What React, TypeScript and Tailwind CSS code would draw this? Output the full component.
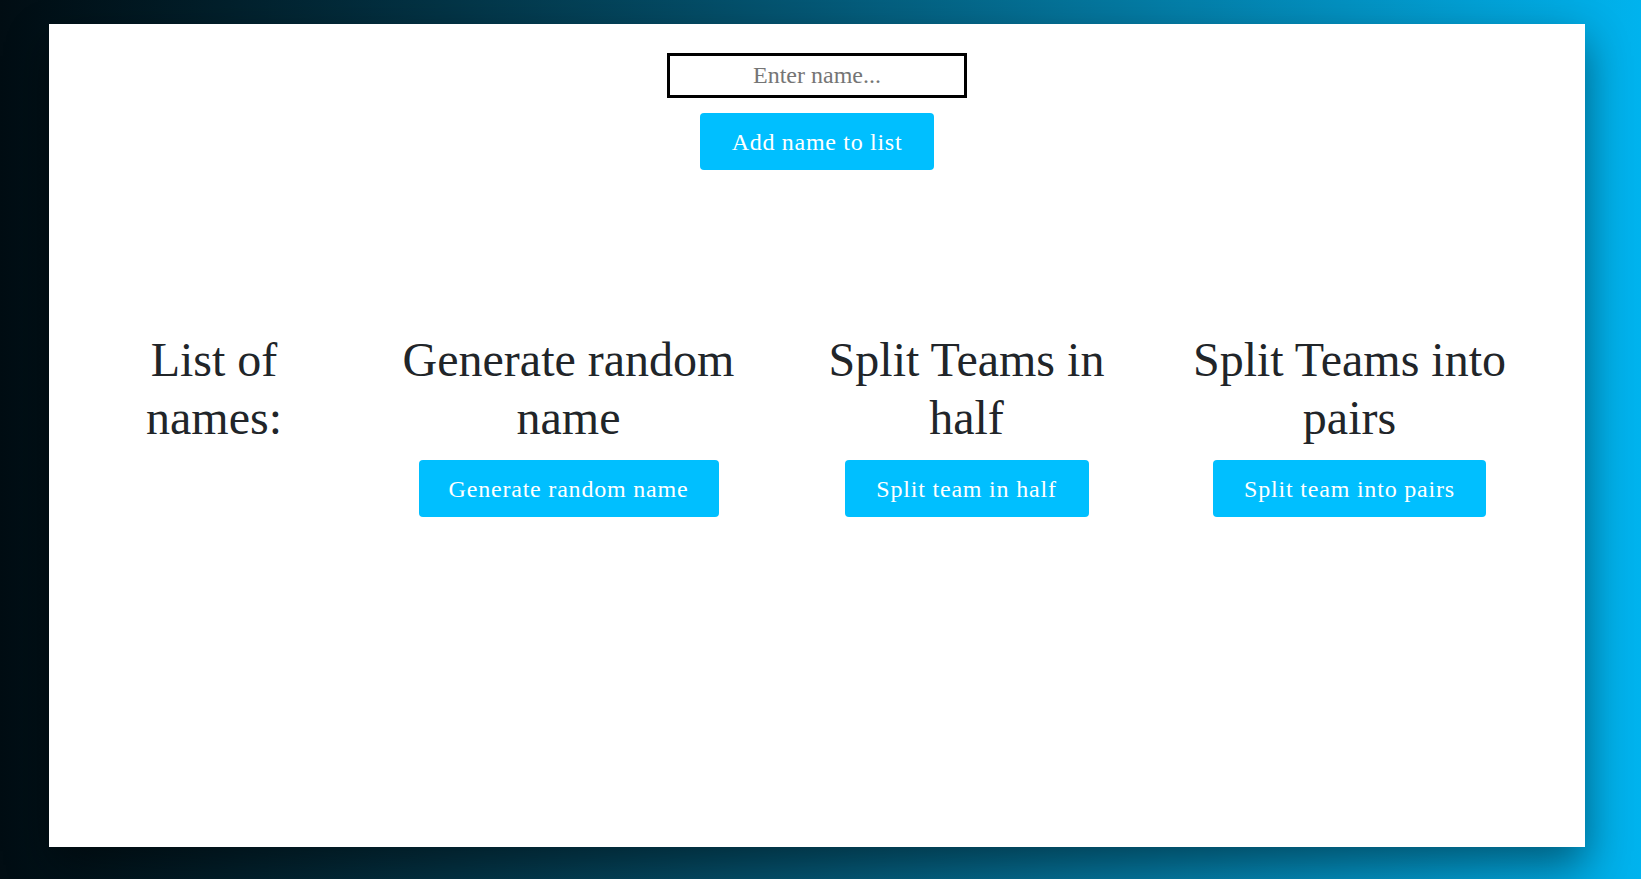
import { useState } from 'react'

const sections = [
  { title: 'List of names:', width: 'w-[250px]', button: null, btnWidth: '' },
  { title: 'Generate random name', width: 'w-[419px]', button: 'Generate random name', btnWidth: 'w-[300px]' },
  { title: 'Split Teams in half', width: 'w-[337px]', button: 'Split team in half', btnWidth: 'w-[244px]' },
  { title: 'Split Teams into pairs', width: 'w-[389px]', button: 'Split team into pairs', btnWidth: 'w-[273px]' },
]

export default function App() {
  const [name, setName] = useState('')

  return (
    <div className="min-h-screen bg-linear-to-r from-[#010d13] to-[#00b3ee] pt-[24px] pl-[49px] pr-[56px] pb-[32px] font-['Liberation_Serif',serif]">
      <main className="h-[823px] bg-white flex flex-col items-center shadow-[0_18px_40px_rgba(0,0,0,0.45)]">
        <input
          value={name}
          onChange={(e) => setName(e.target.value)}
          placeholder="Enter name..."
          className="mt-[29px] w-[300px] h-[45px] border-[3px] border-black text-center text-[24px] text-[#212529] placeholder:text-[#757575] outline-none"
        />
        <button className="mt-[15px] w-[234px] h-[57px] rounded-[4px] bg-[#00bfff] text-white text-[24px] tracking-[0.7px]">
          Add name to list
        </button>

        <div className="mt-[161px] self-stretch flex gap-[20px] pl-[40px]">
          {sections.map((s) => (
            <div key={s.title} className={`${s.width} flex flex-col items-center text-center`}>
              <h1 className="text-[48px] leading-[57.6px] text-[#212529]">{s.title}</h1>
              {s.button && (
                <button className={`${s.btnWidth} mt-[14px] h-[57px] rounded-[4px] bg-[#00bfff] text-white text-[24px] tracking-[0.8px]`}>
                  {s.button}
                </button>
              )}
            </div>
          ))}
        </div>
      </main>
    </div>
  )
}
